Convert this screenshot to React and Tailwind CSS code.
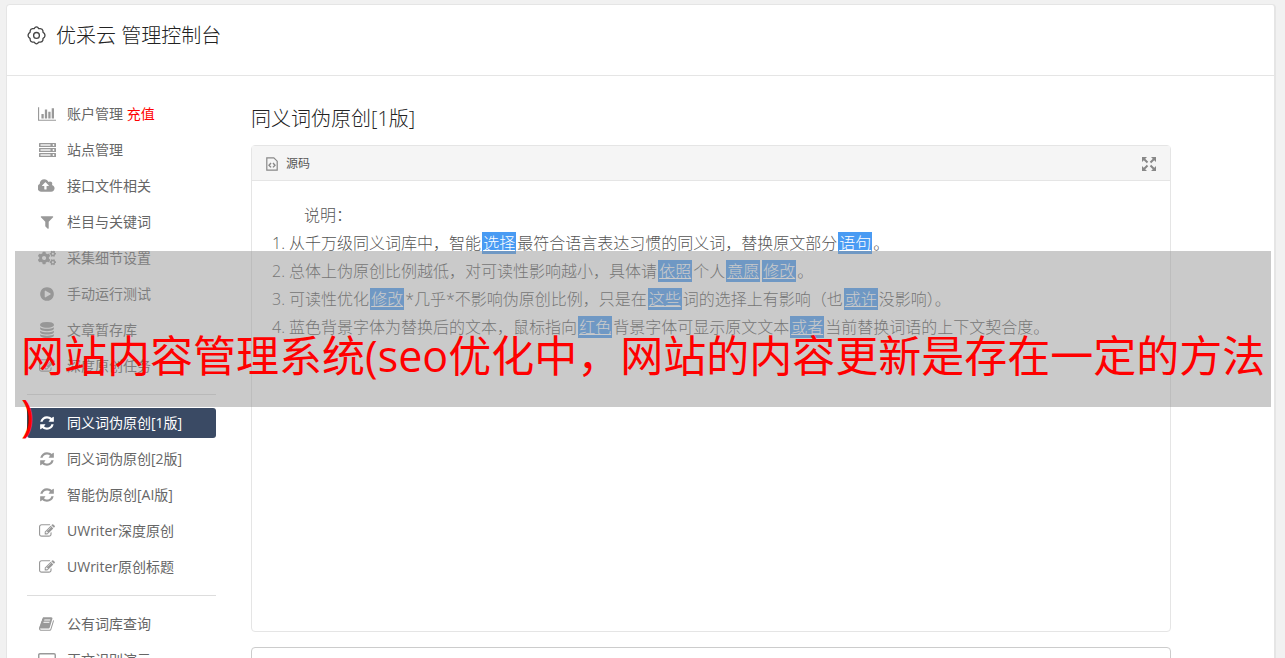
import React from "react";
import { FaCogs } from "react-icons/fa";

const FaIcon = ({ d, width = 1792 }) => (
  <svg viewBox={`0 0 ${width} 1792`} fill="currentColor" className="h-4 w-auto">
    <path d={d} />
  </svg>
);

const paths = {
  chart:
    "M640 896v512h-256v-512h256zm384-512v1024h-256v-1024h256zm1024 1152v128h-2048v-1536h128v1408h1920zm-640-896v768h-256v-768h256zm384-384v1152h-256v-1152h256z",
  cloud:
    "M1216 864q0-14-9-23l-352-352q-9-9-23-9t-23 9l-351 351q-10 12-10 24 0 14 9 23t23 9h224v352q0 13 9.5 22.5t22.5 9.5h192q13 0 22.5-9.5t9.5-22.5v-352h224q13 0 22.5-9.5t9.5-22.5zm640 288q0 159-112.5 271.5t-271.5 112.5h-1088q-185 0-316.5-131.5t-131.5-316.5q0-130 70-240t188-165q-2-30-2-43 0-212 150-362t362-150q156 0 285.5 87t188.5 231q71-62 166-62 106 0 181 75t75 181q0 76-41 138 130 31 213.5 135.5t83.5 238.5z",
  filter:
    "M1595 295q17 41-14 70l-493 493v742q0 42-39 59-13 5-25 5-27 0-45-19l-256-256q-19-19-19-45v-486l-493-493q-31-29-14-70 17-39 59-39h1280q42 0 59 39z",
  play: "M896 128q209 0 385.5 103t279.5 279.5 103 385.5-103 385.5-279.5 279.5-385.5 103-385.5-103-279.5-279.5-103-385.5 103-385.5 279.5-279.5 385.5-103zm384 823q32-18 32-55t-32-55l-544-320q-31-19-64-1-32 19-32 56v640q0 37 32 56 16 8 32 8 17 0 32-9z",
  database:
    "M896 768q237 0 443-43t325-127v170q0 69-103 128t-280 93.5-385 34.5-385-34.5-280-93.5-103-128v-170q119 84 325 127t443 43zm0 768q237 0 443-43t325-127v170q0 69-103 128t-280 93.5-385 34.5-385-34.5-280-93.5-103-128v-170q119 84 325 127t443 43zm0-384q237 0 443-43t325-127v170q0 69-103 128t-280 93.5-385 34.5-385-34.5-280-93.5-103-128v-170q119 84 325 127t443 43zm0-1152q208 0 385 34.5t280 93.5 103 128v128q0 69-103 128t-280 93.5-385 34.5-385-34.5-280-93.5-103-128v-128q0-69 103-128t280-93.5 385-34.5z",
  edit: "M888 1184l116-116-152-152-116 116v56h96v96h56zm440-720q-16-16-33 1l-350 350q-17 17-1 33t33-1l350-350q17-17 1-33zm80 594v190q0 119-84.5 203.5t-203.5 84.5h-832q-119 0-203.5-84.5t-84.5-203.5v-832q0-119 84.5-203.5t203.5-84.5h832q63 0 117 25 15 7 18 23 3 17-9 29l-49 49q-14 14-32 8-23-6-45-6h-832q-66 0-113 47t-47 113v832q0 66 47 113t113 47h832q66 0 113-47t47-113v-126q0-13 9-22l64-64q15-15 35-7t20 29zm-96-738l288 288-672 672h-288v-288zm444 132l-92 92-288-288 92-92q28-28 68-28t68 28l152 152q28 28 28 68t-28 68z",
  refresh:
    "M1639 1056q0 5-1 7-64 268-268 434.5t-478 166.5q-146 0-282.5-55t-243.5-157l-129 129q-19 19-45 19t-45-19-19-45v-448q0-26 19-45t45-19h448q26 0 45 19t19 45-19 45l-137 137q71 66 161 102t187 36q134 0 250-65t186-179q11-17 53-117 8-23 30-23h192q13 0 22.5 9.5t9.5 22.5zm25-800v448q0 26-19 45t-45 19h-448q-26 0-45-19t-19-45 19-45l138-138q-148-137-349-137-134 0-250 65t-186 179q-11 17-53 117-8 23-30 23h-199q-13 0-22.5-9.5t-9.5-22.5v-7q65-268 270-434.5t480-166.5q146 0 284 55.5t245 156.5l130-129q19-19 45-19t45 19 19 45z",
  book: "M1639 478q40 57 18 129l-275 906q-19 64-76.5 107.5t-122.5 43.5h-923q-77 0-148.5-53.5t-99.5-131.5q-24-67-2-127 0-4 3-27t4-37q1-8-3-21.5t-3-19.5q2-11 8-21t16.5-23.5 16.5-23.5q23-38 45-91.5t30-91.5q3-10 .5-30t-.5-28q3-11 17-28t17-23q21-36 42-92t25-90q1-9-2.5-32t.5-28q4-13 22-30.5t22-22.5q19-26 42.5-84.5t27.5-96.5q1-8-3-25.5t-2-26.5q2-8 9-18t18-23 17-21q8-12 16.5-30.5t15-35 16-36 19.5-32 26.5-23.5 36-11.5 47.5 5.5l-1 3q38-9 51-9h761q74 0 114 56t18 130l-274 906q-36 119-71.5 153.5t-128.5 34.5h-869q-27 0-38 15-11 16-1 43 24 70 144 70h923q29 0 56-15.5t35-41.5l300-987q7-22 5-57 38 15 59 43zm-1064 2q-4 13 2 22.5t20 9.5h608q13 0 25.5-9.5t16.5-22.5l21-64q4-13-2-22.5t-20-9.5h-608q-13 0-25.5 9.5t-16.5 22.5zm-83 256q-4 13 2 22.5t20 9.5h608q13 0 25.5-9.5t16.5-22.5l21-64q4-13-2-22.5t-20-9.5h-608q-13 0-25.5 9.5t-16.5 22.5z",
};

const ServerIcon = () => (
  <svg width="17" height="14" viewBox="0 0 17 14">
    {[0, 5, 10].map((y) => (
      <g key={y}>
        <rect x="0" y={y} width="17" height="4" rx="0.5" fill="#999" />
        <path d={`M1.5 ${y + 2}h10`} stroke="#ddd" strokeWidth="2" />
        <circle cx="14.5" cy={y + 2} r="0.9" fill="#fff" />
      </g>
    ))}
  </svg>
);

const DesktopIcon = () => (
  <svg width="18" height="15" viewBox="0 0 18 15" fill="none" stroke="#999">
    <rect x="0.75" y="0.75" width="16.5" height="11" rx="1.2" strokeWidth="1.4" />
    <path d="M5 14.25h8" strokeWidth="1.4" />
  </svg>
);

const GearIcon = () => (
  <svg width="19" height="19" viewBox="0 0 19 19" fill="none" stroke="#444" strokeWidth="1.3">
    <path
      strokeLinejoin="round"
      d="M8 1.500Q9.500.3 11 1.500L11.600 2.700L13.300 2.600Q15.500 2.800 15.900 4.600L16 6.300L17.400 7.600Q18.500 9.500 17.400 11.200L16 12.500L15.900 14.200Q15.300 16 13.300 16.100L11.700 16.100L10.700 17.300Q9.500 18.300 8.200 17.300L7.200 16.100L5.500 16.100Q3.600 15.900 3.200 14.200L3.100 12.500L1.700 11.200Q.5 9.500 1.700 7.600L3.100 6.300L3.200 4.600Q3.600 2.800 5.500 2.600L7.200 2.700z"
    />
    <circle cx="9.500" cy="9.400" r="2.900" />
  </svg>
);

const SourceIcon = () => (
  <svg width="12" height="14" viewBox="0 0 12 14" fill="none" stroke="#888" strokeWidth="1.2">
    <path d="M.8.8h7l3.400 3.400v9H.8z" />
    <path d="M5 6L3 8.200l2 2.200M7 6l2 2.200-2 2.200" strokeWidth="1.4" />
  </svg>
);

const ExpandIcon = () => (
  <svg width="14" height="14" viewBox="0 0 14 14" fill="#888" stroke="#888">
    <path
      stroke="none"
      d="M0 0h5L0 5zM14 0v5L9 0zM0 14V9l5 5zM14 14H9l5-5z"
    />
    <path strokeWidth="2" d="M1.500 1.500L5.500 5.500M12.500 1.500L8.500 5.500M1.500 12.500L5.500 8.500M12.500 12.500L8.500 8.500" />
  </svg>
);

const menu = [
  [
    { icon: <FaIcon d={paths.chart} width={2048} />, text: "账户管理", extra: "充值" },
    { icon: <ServerIcon />, text: "站点管理" },
    { icon: <FaIcon d={paths.cloud} width={1920} />, text: "接口文件相关" },
    { icon: <FaIcon d={paths.filter} />, text: "栏目与关键词" },
    { icon: <FaCogs size={18} />, text: "采集细节设置" },
    { icon: <FaIcon d={paths.play} />, text: "手动运行测试" },
    { icon: <FaIcon d={paths.database} />, text: "文章暂存库" },
    { icon: <FaIcon d={paths.edit} />, text: "深度原创任务" },
  ],
  [
    { icon: <FaIcon d={paths.refresh} />, text: "同义词伪原创[1版]", active: true },
    { icon: <FaIcon d={paths.refresh} />, text: "同义词伪原创[2版]" },
    { icon: <FaIcon d={paths.refresh} />, text: "智能伪原创[AI版]" },
    { icon: <FaIcon d={paths.edit} />, text: "UWriter深度原创" },
    { icon: <FaIcon d={paths.edit} />, text: "UWriter原创标题" },
  ],
  [
    { icon: <FaIcon d={paths.book} />, text: "公有词库查询" },
    { icon: <DesktopIcon />, text: "正文识别演示" },
  ],
];

const MenuItem = ({ icon, text, extra, active }) => (
  <li className="py-[3px]">
    <a
      href="#"
      className={
        active
          ? "flex h-[30px] items-center rounded-[3px] bg-[#3a4a64] text-white"
          : "flex h-[30px] items-center text-[#666]"
      }
    >
      <span
        className={
          active
            ? "flex w-10 justify-center text-white"
            : "flex w-10 justify-center text-[#999]"
        }
      >
        {icon}
      </span>
      <span>
        {text}
        {extra && <span className="text-[#f00]"> {extra}</span>}
      </span>
    </a>
  </li>
);

// Palabra sustituida por un sinónimo
const Word = ({ children }) => (
  <span className="mx-px bg-[#499bf3] px-px text-white underline">{children}</span>
);

const App = () => {
  return (
    <div className="h-screen overflow-hidden bg-[#f1f1f1] pl-[6px] pr-[9px] pt-1 font-['Open_Sans','Noto_Sans_CJK_SC',sans-serif]">
      <div className="min-h-[700px] rounded-t border border-r-2 border-[#e5e5e5] bg-white">
        <header className="flex h-[71px] items-start gap-[10px] border-b border-[#e5e5e5] pl-5 pt-4">
          <div className="flex h-7 items-center">
            <GearIcon />
          </div>
          <h1 className="pt-px text-xl font-light text-[#222]">优采云 管理控制台</h1>
        </header>
        <div className="flex pl-5 pr-[103px] pt-5">
          <nav className="w-[189px] shrink-0 text-sm">
            {menu.map((group, i) => (
              <ul
                key={i}
                className={i > 0 ? "mt-[10px] border-t border-[#ddd] pt-[10px]" : ""}
              >
                {group.map((item) => (
                  <MenuItem key={item.text} {...item} />
                ))}
              </ul>
            ))}
          </nav>
          <main className="ml-[35px] min-w-0 flex-1 pt-[9px]">
            <h2 className="text-xl font-light text-[#222]">同义词伪原创[1版]</h2>
            <section className="mt-3 rounded border border-[#e5e5e5]">
              <div className="flex h-[35px] items-center justify-between border-b border-[#e5e5e5] bg-[#f5f5f5] px-[14px] pt-[2px]">
                <button className="flex items-center gap-2 text-xs text-[#555]">
                  <SourceIcon />
                  源码
                </button>
                <button aria-label="全屏">
                  <ExpandIcon />
                </button>
              </div>
              <div className="min-h-[450px] px-5 pt-5 text-base leading-7 font-light text-[#555]">
                <p className="indent-8">说明：</p>
                <ol className="list-inside list-decimal whitespace-nowrap">
                  <li>
                    从千万级同义词库中，智能<Word>选择</Word>
                    最符合语言表达习惯的同义词，替换原文部分<Word>语句</Word>。
                  </li>
                  <li>
                    总体上伪原创比例越低，对可读性影响越小，具体请<Word>依照</Word>
                    个人<Word>意愿</Word><Word>修改</Word>。
                  </li>
                  <li>
                    可读性优化<Word>修改</Word>
                    *几乎*不影响伪原创比例，只是在<Word>这些</Word>
                    词的选择上有影响（也<Word>或许</Word>没影响）。
                  </li>
                  <li>
                    蓝色背景字体为替换后的文本，鼠标指向<Word>红色</Word>
                    背景字体可显示原文文本<Word>或者</Word>
                    当前替换词语的上下文契合度。
                  </li>
                </ol>
              </div>
            </section>
            <section className="mt-[15px] h-10 rounded border border-[#ccc]" />
          </main>
        </div>
      </div>
      <div className="absolute top-[251px] right-[14px] left-[15px] h-[156px] bg-[#969696]/50">
        <p className="pt-[75px] pl-[6px] text-[43px] leading-[59px] [line-break:anywhere] text-[#f00]">
          网站内容管理系统(seo优化中，网站的内容更新是存在一定的方法)
        </p>
      </div>
    </div>
  );
};

export default App;
